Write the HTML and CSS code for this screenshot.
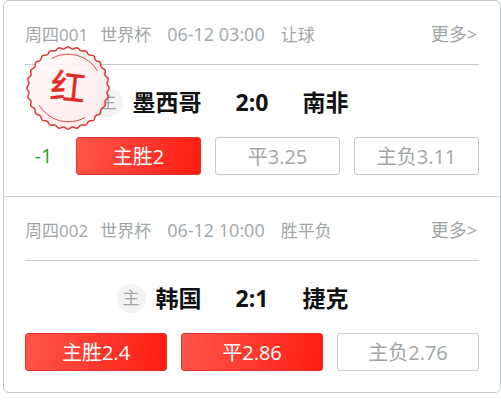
FILE: index.html
```html
<!DOCTYPE html>
<html lang="zh-CN">
<head>
<meta charset="utf-8">
<meta name="viewport" content="width=device-width, initial-scale=1">
<title>世界杯</title>
<link rel="stylesheet" href="styles.css">
</head>
<body>
<main class="card">
  <section class="match">
    <header class="head">
      <span>周四001</span><span class="league">世界杯</span><time class="time">06-12 03:00</time><span class="kind">让球</span>
      <a class="more" href="#">更多&gt;</a>
    </header>
    <div class="teams">
      <div class="home"><span class="badge">主</span>墨西哥</div>
      <div class="score">2:0</div>
      <div class="away">南非</div>
    </div>
    <div class="odds">
      <span class="handicap">-1</span>
      <button class="odd hit" type="button">主胜2</button>
      <button class="odd" type="button">平3.25</button>
      <button class="odd" type="button">主负3.11</button>
    </div>
    <svg class="stamp" viewBox="-43 -43 86 86" role="img" aria-label="红">
      <defs>
        <linearGradient id="wash" x1="0" y1="0" x2="1" y2="1">
          <stop offset="0" stop-color="#fff" stop-opacity=".85"/>
          <stop offset=".3" stop-color="#fff5f5" stop-opacity=".9"/>
          <stop offset="1" stop-color="#ffe4e4" stop-opacity=".88"/>
        </linearGradient>
      </defs>
      <path id="rim" fill="url(#wash)" stroke="#d63a36" stroke-width="1.5"/>
      <path d="M-16.500-29.500A34 34 0 0 1 29.500-17M-29 17A34 34 0 0 0 17 29.500" fill="none" stroke="#dc4a45" stroke-width="1"/>
      <text class="stamp-text" x="0" y="12" text-anchor="middle" transform="rotate(6)">红</text>
    </svg>
  </section>
  <section class="match">
    <header class="head">
      <span>周四002</span><span class="league">世界杯</span><time class="time">06-12 10:00</time><span class="kind">胜平负</span>
      <a class="more" href="#">更多&gt;</a>
    </header>
    <div class="teams">
      <div class="home"><span class="badge">主</span>韩国</div>
      <div class="score">2:1</div>
      <div class="away">捷克</div>
    </div>
    <div class="odds">
      <button class="odd hit" type="button">主胜2.4</button>
      <button class="odd hit" type="button">平2.86</button>
      <button class="odd" type="button">主负2.76</button>
    </div>
  </section>
</main>
<script src="stamp.js"></script>
</body>
</html>
```
FILE: styles.css
```css
* { box-sizing: border-box; }

body {
  margin: 0;
  padding: 0 0 7px 3px;
  background: #fff;
  color: #111;
  font-family: "Open Sans", "Noto Sans CJK SC", sans-serif;
}

.card {
  border: 1px solid #c5cbcd;
  border-radius: 6px;
}

.match {
  position: relative;
  padding: 0 21px 21px;
}

.match + .match { border-top: 1px solid #c5cbcd; }

.head {
  display: flex;
  align-items: baseline;
  height: 64px;
  padding-top: 21px;
  border-bottom: 1px solid #c5cbcd;
  color: #a0a6a8;
  font-size: 17px;
  line-height: 24px;
}

.league { margin-left: 12px; }

.time {
  margin-left: 16px;
  font-size: 18px;
}

.kind { margin-left: 16px; }

.more {
  margin-left: auto;
  margin-right: 2px;
  color: inherit;
  font-size: 18px;
  text-decoration: none;
}

.teams {
  display: grid;
  grid-template-columns: 1fr auto 1fr;
  align-items: center;
  column-gap: 34px;
  height: 72px;
  padding-top: 2px;
  font-size: 23px;
  font-weight: 700;
  line-height: 32px;
}

.home {
  display: flex;
  align-items: center;
  justify-content: flex-end;
  gap: 10px;
}

.badge {
  width: 29px;
  height: 29px;
  border-radius: 50%;
  background: #f3f3f3;
  color: #a0a6a8;
  font-size: 17px;
  font-weight: 400;
  line-height: 28px;
  text-align: center;
}

.odds {
  display: flex;
  gap: 14px;
}

.handicap {
  width: 37px;
  color: #1aa32e;
  font-size: 20px;
  line-height: 38px;
  text-align: center;
}

.odd {
  flex: 1 1 0;
  height: 38px;
  padding: 2px 0 0;
  border: 1px solid #c5cbcd;
  border-radius: 3px;
  background: #fff;
  color: #a0a6a8;
  font: 20px/34px "Open Sans", "Noto Sans CJK SC", sans-serif;
}

.hit {
  border-color: #e0332b;
  background: linear-gradient(100deg, #ff564b, #ff1c10);
  color: #fff;
}

.stamp {
  position: absolute;
  top: 44px;
  left: 21px;
  width: 86px;
  height: 86px;
}

.stamp-text {
  fill: #e02a24;
  stroke: #e02a24;
  stroke-width: 0.5;
  font-family: "Noto Sans CJK SC", sans-serif;
  font-size: 35px;
  font-weight: 400;
}
```
FILE: stamp.js
```js
// Scalloped rim of the stamp
const lobes = 28;
let d = "";
for (let i = 0; i < 360; i++) {
  const a = i * Math.PI / 180;
  const r = 40.2 + 0.9 * Math.cos(lobes * (a + Math.PI / 2));
  d += (i ? "L" : "M") + (r * Math.cos(a)).toFixed(2) + " " + (r * Math.sin(a)).toFixed(2);
}
document.getElementById("rim").setAttribute("d", d + "Z");
```
